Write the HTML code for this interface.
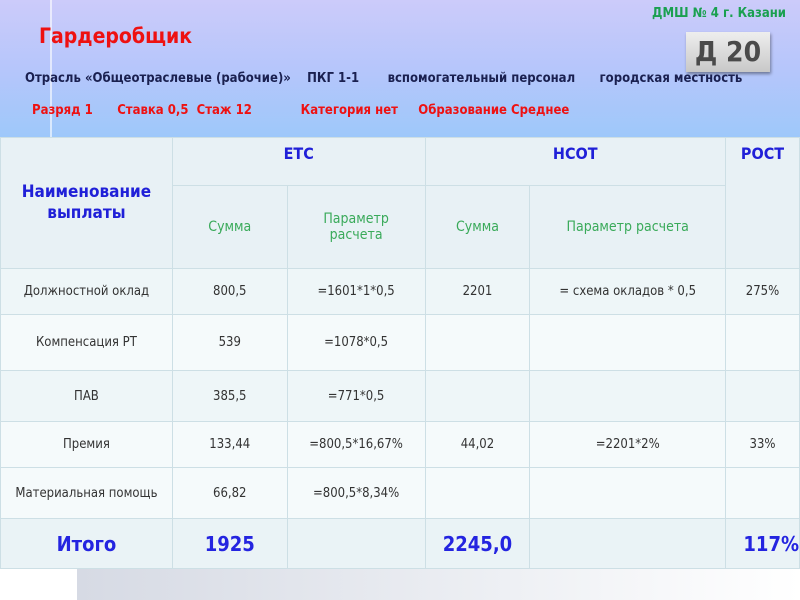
<!DOCTYPE html>
<html><head><meta charset="utf-8"><style>
*{margin:0;padding:0;box-sizing:border-box}
body{width:800px;height:600px;overflow:hidden;position:relative;font-family:"Liberation Sans","DejaVu Sans",sans-serif;background:#fff}
.top{position:absolute;left:0;top:0;width:800px;height:137px;background:linear-gradient(#cccbfa,#b6c6fb 50%,#9ec8fa)}
.vl{position:absolute;left:50px;top:0;width:2px;height:137px;background:rgba(255,255,255,.6)}
.t{position:absolute;white-space:nowrap;font-weight:bold;font-family:"DejaVu Sans Condensed","DejaVu Sans",sans-serif}
.badge{position:absolute;left:686px;top:32px;width:84px;height:40px;background:linear-gradient(#eee,#c8c8c8);box-shadow:1px 2px 3px rgba(0,0,0,.4);font:bold 28px "DejaVu Sans Condensed","Liberation Sans",sans-serif;color:#4a4a4a;text-align:center;line-height:40px}
table{position:absolute;left:0;top:137px;width:800px;border-collapse:collapse;font-family:"DejaVu Sans Condensed","Liberation Sans","DejaVu Sans",sans-serif}
td{border:1.5px solid #cddfe5;text-align:center;font-size:13px;color:#333}
.h td{background:#e8f1f5}
.hb{color:#2020d8;font-weight:bold;font-size:16px;vertical-align:top;padding-top:6px}
.g{color:#3aaa5a;font-size:14px}
.r1 td{background:#eef6f8}
.r2 td{background:#f5fafb}
.tot td{background:#eaf3f6;color:#2424e0;font-weight:bold;font-size:20px}
.bar{position:absolute;left:77px;top:569px;width:723px;height:31px;background:linear-gradient(90deg,#d6dae4,#eef0f4 60%,#fff)}
</style></head><body>
<div class="top"></div><div class="vl"></div>
<div class="t" style="right:14px;top:6px;font-size:13px;color:#1aa050">ДМШ № 4 г. Казани</div>
<div class="t" style="left:39px;top:24px;font-size:21px;color:#ee1111">Гардеробщик</div>
<div class="badge">Д 20</div>
<div class="t" style="left:25px;top:71px;font-size:13px;color:#1a2050">Отрасль «Общеотраслевые (рабочие)» &nbsp;&nbsp;&nbsp;ПКГ 1-1 &nbsp;&nbsp;&nbsp;&nbsp;&nbsp;&nbsp;вспомогательный персонал &nbsp;&nbsp;&nbsp;&nbsp;&nbsp;городская местность</div>
<div class="t" style="left:32px;top:103px;font-size:13px;color:#ee1111">Разряд 1 &nbsp;&nbsp;&nbsp;&nbsp;&nbsp;Ставка 0,5 &nbsp;Стаж 12 &nbsp;&nbsp;&nbsp;&nbsp;&nbsp;&nbsp;&nbsp;&nbsp;&nbsp;&nbsp;&nbsp;Категория нет &nbsp;&nbsp;&nbsp;&nbsp;Образование Среднее</div>
<table>
<colgroup><col style="width:172px"><col style="width:115px"><col style="width:138px"><col style="width:105px"><col style="width:196px"><col style="width:74px"></colgroup>
<tr class="h" style="height:48px"><td rowspan="2" style="color:#2020d8;font-weight:bold;font-size:17px;line-height:21px">Наименование<br>выплаты</td><td colspan="2" class="hb">ЕТС</td><td colspan="2" class="hb">НСОТ</td><td rowspan="2" class="hb">РОСТ</td></tr>
<tr class="h" style="height:83px"><td class="g">Сумма</td><td class="g">Параметр<br>расчета</td><td class="g">Сумма</td><td class="g">Параметр расчета</td></tr>
<tr class="r1" style="height:46px"><td>Должностной оклад</td><td>800,5</td><td>=1601*1*0,5</td><td>2201</td><td>= схема окладов * 0,5</td><td>275%</td></tr>
<tr class="r2" style="height:56px"><td>Компенсация РТ</td><td>539</td><td>=1078*0,5</td><td></td><td></td><td></td></tr>
<tr class="r1" style="height:51px"><td>ПАВ</td><td>385,5</td><td>=771*0,5</td><td></td><td></td><td></td></tr>
<tr class="r2" style="height:46px"><td>Премия</td><td>133,44</td><td>=800,5*16,67%</td><td>44,02</td><td>=2201*2%</td><td>33%</td></tr>
<tr class="r2" style="height:51px"><td>Материальная помощь</td><td>66,82</td><td>=800,5*8,34%</td><td></td><td></td><td></td></tr>
<tr class="tot" style="height:50px"><td>Итого</td><td>1925</td><td></td><td>2245,0</td><td></td><td style="text-align:right">117%</td></tr>
</table>
<div class="bar"></div>
</body></html>
